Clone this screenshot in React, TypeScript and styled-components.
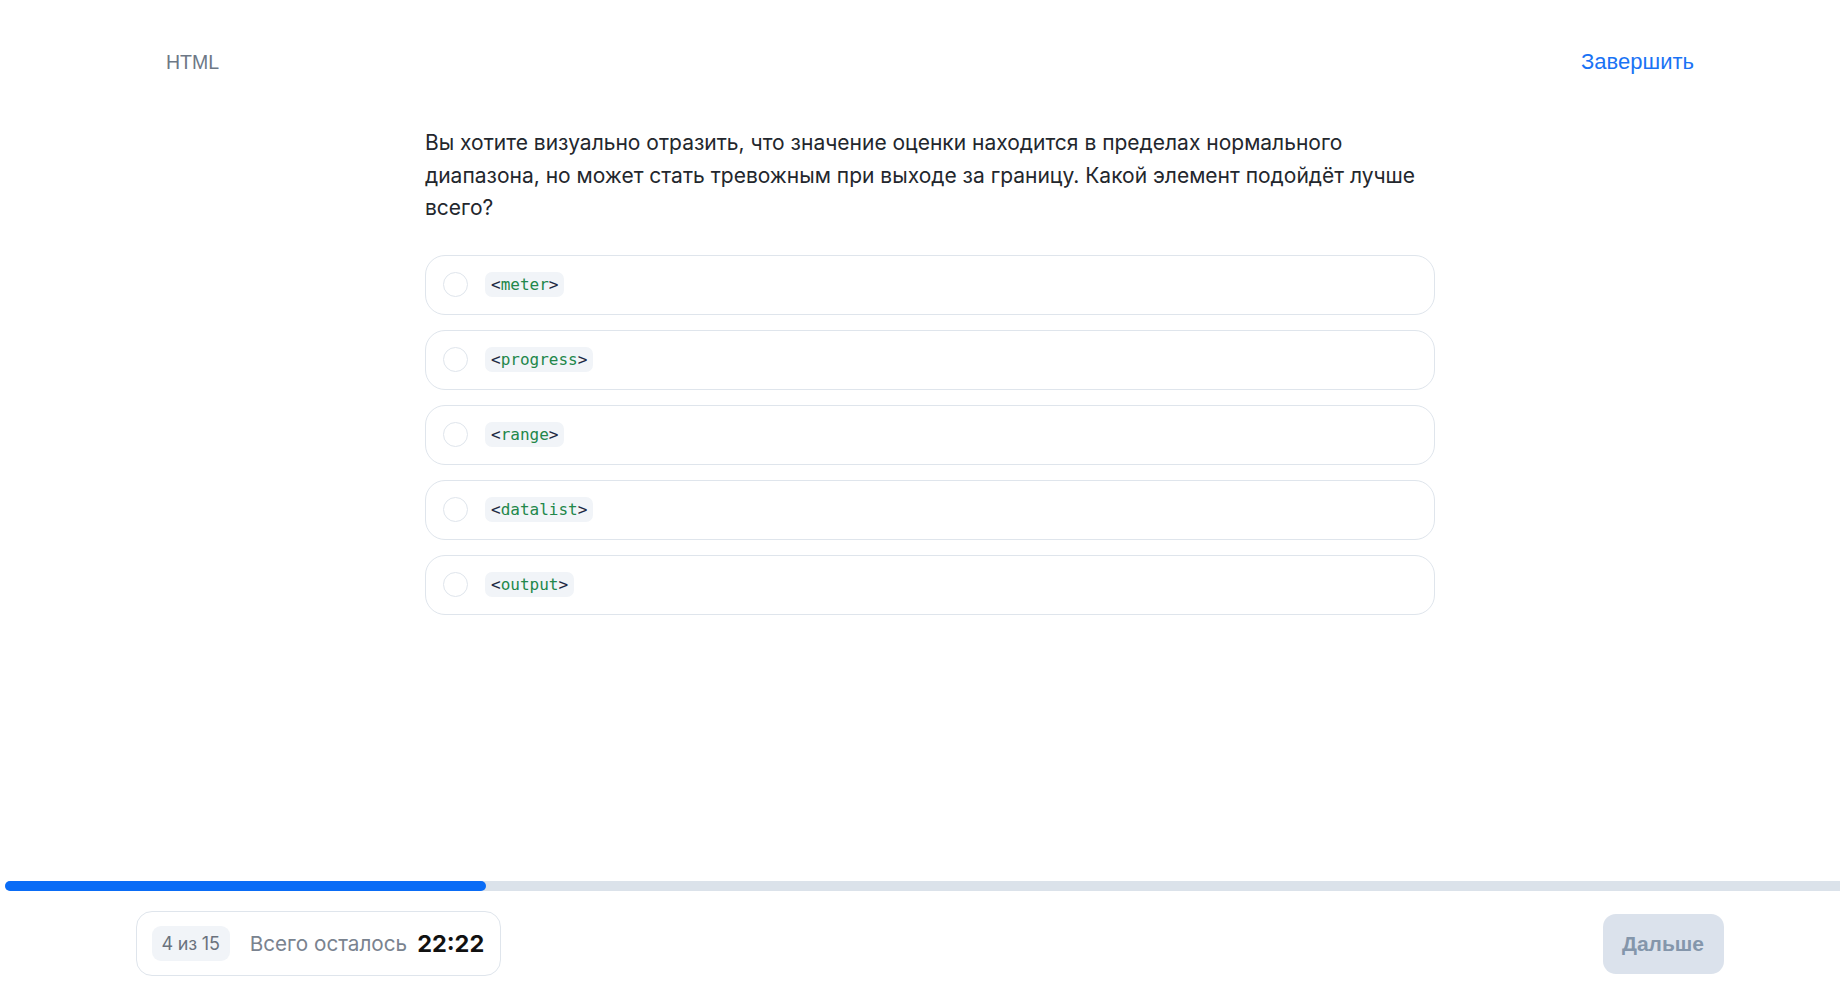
import React from "react";
import styled, { createGlobalStyle } from "styled-components";

const GlobalStyle = createGlobalStyle`
  html, body { margin: 0; padding: 0; background: #ffffff; }
  body { font-family: Inter, "Noto Sans", sans-serif; }
  * { box-sizing: border-box; }
`;

const Page = styled.div`
  display: flex;
  flex-direction: column;
  min-height: 100vh;
  overflow: hidden;
`;

const Shell = styled.div`
  padding-left: 20px;
`;

const Header = styled.header`
  width: 1528px;
  height: 124px;
  margin: 0 auto;
  display: flex;
  align-items: center;
  justify-content: space-between;
`;

const Subject = styled.span`
  font-family: "Liberation Sans", Arial, sans-serif;
  font-size: 19.5px;
  color: #6d7886;
`;

const FinishLink = styled.a`
  font-family: "Liberation Sans", Arial, sans-serif;
  font-size: 22px;
  color: #1a73f5;
  cursor: pointer;
`;

const Content = styled.main`
  width: 1010px;
  margin: 0 auto;
`;

const Question = styled.p`
  margin: 3px 0 30px;
  font-size: 21px;
  line-height: 32.5px;
  color: #23272d;
`;

const Options = styled.div`
  display: flex;
  flex-direction: column;
  gap: 15px;
`;

const Option = styled.label`
  height: 60px;
  border: 1px solid #dfe5ec;
  border-radius: 20px;
  display: flex;
  align-items: center;
  padding-left: 17px;
  gap: 17px;
  cursor: pointer;
`;

const Radio = styled.span`
  width: 25px;
  height: 25px;
  border-radius: 50%;
  border: 1.5px solid #dfe5ec;
  flex-shrink: 0;
`;

const Code = styled.code`
  font-family: "DejaVu Sans Mono", monospace;
  font-size: 16px;
  line-height: 25px;
  height: 25px;
  padding: 0 6px;
  border-radius: 7px;
  background: #f1f4f8;
  color: #22874a;
`;

const Bracket = styled.span`
  color: #1e2a45;
`;

const Footer = styled.footer`
  margin-top: auto;
`;

const Track = styled.div`
  margin-left: 5px;
  height: 10px;
  background: #dbe2ea;
  border-radius: 5px 0 0 5px;
`;

const Fill = styled.div`
  height: 100%;
  background: #0a6cf6;
  border-radius: 5px;
`;

const BottomBar = styled.div`
  width: 1589px;
  margin: 20px auto 23px;
  display: flex;
  align-items: center;
  justify-content: space-between;
`;

const TimerBox = styled.div`
  height: 65px;
  border: 1px solid #dfe5ec;
  border-radius: 16px;
  display: flex;
  align-items: center;
  padding: 0 16px 0 15px;
`;

const Counter = styled.span`
  height: 35px;
  padding: 0 10px;
  display: flex;
  align-items: center;
  border-radius: 9px;
  background: #f1f4f8;
  font-size: 18px;
  color: #6a727d;
  letter-spacing: -0.2px;
  margin-right: 20px;
`;

const TimeLabel = styled.span`
  font-size: 20.7px;
  color: #7a838f;
  margin-right: 10px;
`;

const Time = styled.span`
  font-size: 23.5px;
  font-weight: 700;
  color: #111111;
`;

const NextButton = styled.button`
  width: 121px;
  height: 60px;
  border: none;
  border-radius: 13px;
  background: #dbe2ec;
  color: #8496ab;
  font-family: "Liberation Sans", Arial, sans-serif;
  font-size: 21px;
  font-weight: 700;
  margin-right: 1px;
`;

const options = ["meter", "progress", "range", "datalist", "output"];

export default function App() {
  const progress = 481;
  return (
    <Page>
      <GlobalStyle />
      <Shell>
        <Header>
          <Subject>HTML</Subject>
          <FinishLink>Завершить</FinishLink>
        </Header>
        <Content>
          <Question>
            Вы хотите визуально отразить, что значение оценки находится в пределах нормального
            диапазона, но может стать тревожным при выходе за границу. Какой элемент подойдёт лучше
            всего?
          </Question>
          <Options>
            {options.map((o) => (
              <Option key={o}>
                <Radio />
                <Code>
                  <Bracket>&lt;</Bracket>
                  {o}
                  <Bracket>&gt;</Bracket>
                </Code>
              </Option>
            ))}
          </Options>
        </Content>
      </Shell>
      <Footer>
        <Track>
          <Fill style={{ width: progress }} />
        </Track>
        <Shell>
          <BottomBar>
            <TimerBox>
              <Counter>4 из 15</Counter>
              <TimeLabel>Всего осталось</TimeLabel>
              <Time>22:22</Time>
            </TimerBox>
            <NextButton>Дальше</NextButton>
          </BottomBar>
        </Shell>
      </Footer>
    </Page>
  );
}
